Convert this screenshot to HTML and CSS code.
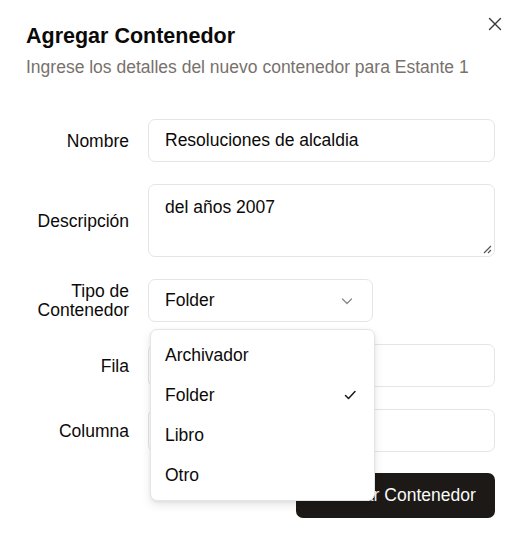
FILE: index.html
```html
<!DOCTYPE html>
<html lang="es">
<head>
<meta charset="utf-8">
<title>Agregar Contenedor</title>
<link rel="stylesheet" href="styles.css">
</head>
<body>
<div class="dialog">
  <button class="close" aria-label="Cerrar">
    <svg width="14" height="14" viewBox="0 0 14 14" fill="none" stroke="currentColor" stroke-width="1.4" stroke-linecap="round"><path d="M1.5 1.5L12.5 12.5M12.5 1.5L1.5 12.5"/></svg>
  </button>
  <header class="head">
    <h2 class="title">Agregar Contenedor</h2>
    <p class="desc">Ingrese los detalles del nuevo contenedor para Estante 1</p>
  </header>
  <form class="form">
    <label class="label">Nombre</label>
    <div class="field">Resoluciones de alcaldia</div>

    <label class="label">Descripción</label>
    <div class="field area">del años 2007
      <svg class="grip" width="10" height="10" viewBox="0 0 10 10" stroke="#555" stroke-width="1.2"><path d="M9 2L2 9M9 6L6 9"/></svg>
    </div>

    <label class="label two">Tipo de<br>Contenedor</label>
    <div class="selwrap">
      <div class="field select">
        <span>Folder</span>
        <svg width="14" height="14" viewBox="0 0 14 14" fill="none" stroke="#8a8580" stroke-width="1.2" stroke-linecap="round" stroke-linejoin="round"><path d="M2.5 5l4.5 4.5L11.5 5"/></svg>
      </div>
      <ul class="menu">
        <li>Archivador</li>
        <li class="sel">Folder
          <svg width="14" height="14" viewBox="0 0 14 14" fill="none" stroke="#1c1917" stroke-width="1.5" stroke-linecap="round" stroke-linejoin="round"><path d="M2.5 7.5l3 3L12 3.5"/></svg>
        </li>
        <li>Libro</li>
        <li>Otro</li>
      </ul>
    </div>

    <label class="label">Fila</label>
    <div class="field"></div>

    <label class="label">Columna</label>
    <div class="field"></div>

    <div class="actions">
      <button type="button" class="btn">Guardar Contenedor</button>
    </div>
  </form>
</div>
</body>
</html>
```

FILE: styles.css
```css
* { box-sizing: border-box; }
html, body { margin: 0; background: #fff; }
body {
  font-family: "Liberation Sans", Arial, sans-serif;
  color: #0c0a09;
  width: 520px;
  height: 536px;
  overflow: hidden;
}
.dialog {
  position: relative;
  padding: 23px 25px 0 26px;
}
.close {
  position: absolute;
  top: 17px;
  right: 18px;
  border: 0;
  background: none;
  padding: 0;
  color: #3a3633;
  width: 14px;
  height: 14px;
}
.close svg { display: block; }
.head { margin-bottom: 41px; }
.title {
  margin: 0;
  font-size: 21.5px;
  font-weight: 700;
  line-height: 26px;
  color: #0c0a09;
}
.desc {
  margin: 7px 0 0;
  font-size: 17.5px;
  line-height: 22px;
  color: #78716c;
}
.form {
  display: grid;
  grid-template-columns: 103px 1fr;
  column-gap: 19px;
  row-gap: 22px;
  align-items: center;
  font-size: 17.5px;
}
.label {
  text-align: right;
  line-height: 22px;
}
.label.two { line-height: 18.5px; }
.field {
  position: relative;
  height: 43px;
  border: 1px solid #e7e5e4;
  border-radius: 7px;
  padding: 0 16px;
  display: flex;
  align-items: center;
  color: #0c0a09;
  background: #fff;
}
.field.area {
  height: 73px;
  align-items: flex-start;
  padding-top: 12px;
}
.grip { position: absolute; right: 2px; bottom: 2px; }
.selwrap { position: relative; width: 225px; }
.field.select { justify-content: space-between; padding-right: 18px; }
.field.select svg { display: block; }
.menu {
  position: absolute;
  left: 2px;
  top: 50px;
  width: 225px;
  margin: 0;
  padding: 5px 0;
  list-style: none;
  background: #fff;
  border: 1px solid #e7e5e4;
  border-radius: 7px;
  box-shadow: 0 4px 10px rgba(0,0,0,0.10), 0 1px 3px rgba(0,0,0,0.06);
  z-index: 5;
}
.menu li {
  height: 40px;
  display: flex;
  align-items: center;
  justify-content: space-between;
  padding: 0 17px 0 14px;
}
.actions {
  grid-column: 1 / -1;
  display: flex;
  justify-content: flex-end;
  margin-top: -1px;
}
.btn {
  height: 45px;
  width: 199px;
  border: 0;
  border-radius: 7px;
  background: #1c1917;
  color: #fafaf9;
  font-family: inherit;
  font-size: 17.5px;
  padding: 0;
}
```
